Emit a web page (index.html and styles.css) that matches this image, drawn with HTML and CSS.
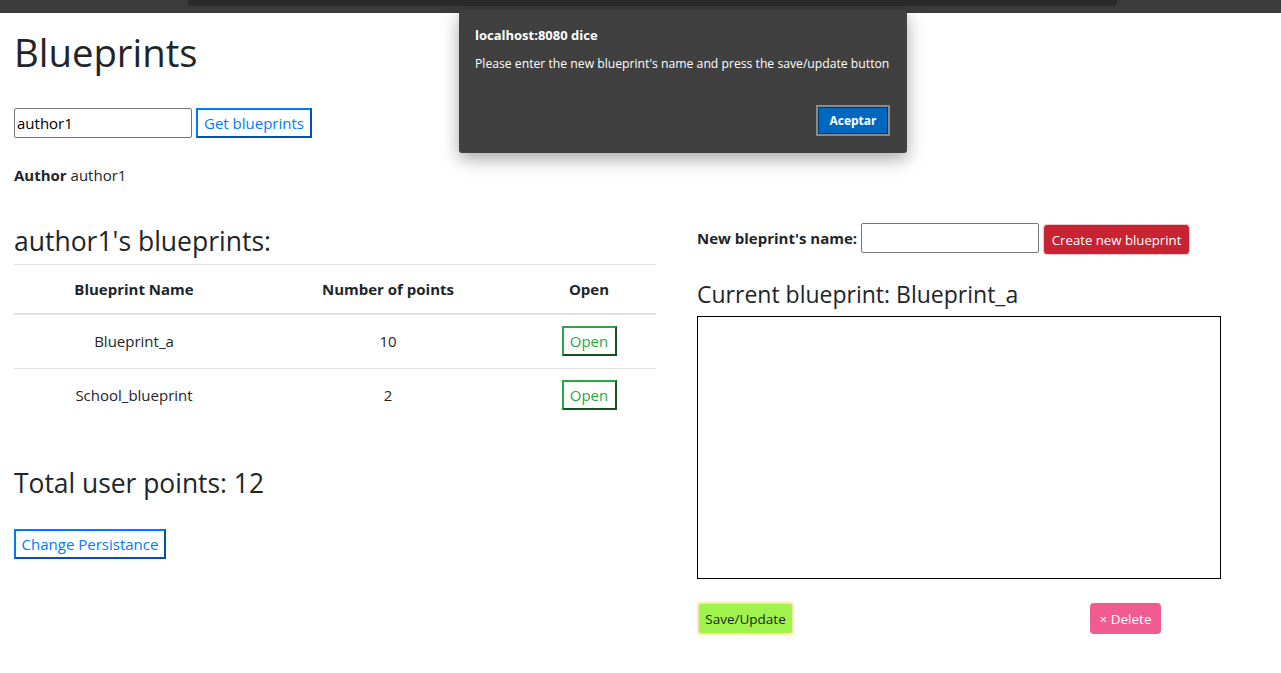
FILE: index.html
```html
<!DOCTYPE html>
<html lang="en">
<head>
<meta charset="utf-8">
<title>Blueprints</title>
<link rel="stylesheet" href="styles.css">
</head>
<body>
<div class="topbar"><div class="topbar-tab"></div></div>
<main class="page">
  <h1 class="title">Blueprints</h1>
  <div class="search-row">
    <input class="text-input" type="text" value="author1">
    <button class="btn-outline btn-blue">Get blueprints</button>
  </div>
  <p class="author-line"><b>Author</b> author1</p>
  <div class="columns">
    <section class="col-left">
      <h3 class="section-title">author1's blueprints:</h3>
      <table class="bp-table">
        <colgroup><col class="c1"><col class="c2"><col class="c3"></colgroup>
        <thead>
          <tr><th>Blueprint Name</th><th>Number of points</th><th>Open</th></tr>
        </thead>
        <tbody>
          <tr><td>Blueprint_a</td><td>10</td><td><button class="btn-outline btn-green">Open</button></td></tr>
          <tr><td>School_blueprint</td><td>2</td><td><button class="btn-outline btn-green">Open</button></td></tr>
        </tbody>
      </table>
      <h3 class="total-title">Total user points: 12</h3>
      <button class="btn-outline btn-blue btn-persist">Change Persistance</button>
    </section>
    <section class="col-right">
      <div class="new-row">
        <label class="new-label">New bleprint's name:</label>
        <input class="text-input" type="text">
        <button class="btn-red">Create new blueprint</button>
      </div>
      <h4 class="current-title">Current blueprint: Blueprint_a</h4>
      <canvas class="board" width="522" height="261"></canvas>
      <div class="actions">
        <button class="btn-save">Save/Update</button>
        <button class="btn-delete">× Delete</button>
      </div>
    </section>
  </div>
</main>
<div class="dialog">
  <div class="dialog-title">localhost:8080 dice</div>
  <div class="dialog-msg">Please enter the new blueprint's name and press the save/update button</div>
  <div class="dialog-foot"><button class="dialog-btn">Aceptar</button></div>
</div>
</body>
</html>
```

FILE: styles.css
```css
* { box-sizing: border-box; }
html, body { margin: 0; padding: 0; background: #fff; }
body {
  font-family: "Open Sans", "Noto Sans", sans-serif;
  font-size: 15px;
  line-height: 1.5;
  color: #212529;
}
.topbar {
  height: 13px;
  background: #3b3b3b;
}
.topbar-tab {
  margin-left: 188px;
  width: 929px;
  height: 6px;
  background: #2b2b2b;
  border-radius: 0 0 4px 4px;
}
.page { padding: 0 14px; }
.title {
  margin: 16px 0 0;
  font-size: 38.3px;
  font-weight: 500;
  line-height: 46px;
}
.search-row {
  margin-top: 33px;
  display: flex;
  align-items: center;
  gap: 4px;
  height: 30px;
}
.text-input {
  width: 178px;
  height: 30px;
  border: 1px solid #767676;
  border-radius: 2px;
  padding: 1px 2px;
  font-family: inherit;
  font-size: 15px;
  color: #000;
  background: #fff;
}
.btn-outline {
  background: #fff;
  font-family: inherit;
  font-size: 15px;
  line-height: 24px;
  padding: 1px 6px;
  border-width: 2px;
  border-style: outset;
  cursor: pointer;
}
.btn-blue { color: #007bff; border-color: #007bff; }
.btn-green { color: #28a745; border-color: #28a745; }
.search-row .btn-outline { height: 30px; width: 116px; padding: 0; }
.author-line {
  margin: 25px 0 0;
  line-height: 24px;
}
.columns {
  display: grid;
  grid-template-columns: 642px 524px;
  column-gap: 41px;
  margin-top: 31px;
  align-items: start;
}
.section-title {
  margin: 6px 0 6px;
  font-size: 26.5px;
  font-weight: 500;
  line-height: 34px;
}
.bp-table {
  width: 642px;
  border-collapse: collapse;
  text-align: center;
}
.bp-table .c1 { width: 240px; }
.bp-table .c2 { width: 268px; }
.bp-table .c3 { width: 134px; }
.bp-table th, .bp-table td {
  padding: 12px;
  border-top: 1px solid #dee2e6;
  vertical-align: middle;
  line-height: 24px;
}
.bp-table th { font-weight: 700; }
.bp-table thead th { border-bottom: 2px solid #dee2e6; }
.bp-table td { padding: 11px 12px 12px; }
.bp-table .btn-outline { height: 30px; width: 55px; padding: 0; }
.total-title {
  margin: 44px 0 0;
  font-size: 26.4px;
  font-weight: 500;
  line-height: 34px;
}
.btn-persist {
  margin-top: 29px;
  height: 30px;
  width: 152px;
  padding: 0;
}
.new-row {
  display: flex;
  align-items: center;
  gap: 4px;
  height: 34px;
  margin-top: 3px;
}
.new-label { font-weight: 700; font-size: 15px; }
.btn-red {
  height: 31px;
  width: 147px;
  margin-top: 3px;
  padding: 0;
  background: #c82333;
  color: #fff;
  border: 1px solid #f3c6cc;
  border-radius: 4px;
  font-family: inherit;
  font-size: 13.2px;
}
.current-title {
  margin: 25px 0 7px;
  font-size: 23px;
  font-weight: 500;
  line-height: 29px;
}
.board {
  display: block;
  width: 524px;
  height: 263px;
  border: 1px solid #000;
  background: #fff;
}
.actions {
  margin-top: 23px;
  width: 464px;
  display: flex;
  justify-content: space-between;
  align-items: center;
}
.btn-save {
  height: 33px;
  width: 97px;
  padding: 0;
  background: #9ff34c;
  color: #212529;
  border: 2px solid #fbe8a6;
  border-radius: 4px;
  font-family: inherit;
  font-size: 13.5px;
}
.btn-delete {
  height: 31px;
  width: 71px;
  padding: 0;
  background: #f05c8f;
  color: #fff;
  border: none;
  border-radius: 4px;
  font-family: inherit;
  font-size: 13.5px;
}
.dialog {
  position: absolute;
  left: 459px;
  top: 10px;
  width: 448px;
  height: 143px;
  background: #404040;
  border-radius: 3px;
  box-shadow: 0 6px 18px rgba(0,0,0,0.35);
  color: #fff;
  padding: 16px 17px 17px 16px;
  display: flex;
  flex-direction: column;
}
.dialog-title {
  font-size: 13px;
  font-weight: 700;
  line-height: 18px;
}
.dialog-msg {
  margin-top: 12px;
  font-size: 12.2px;
  line-height: 16px;
}
.dialog-foot {
  margin-top: auto;
  display: flex;
  justify-content: flex-end;
}
.dialog-btn {
  width: 74px;
  height: 31px;
  background: #0067c0;
  color: #fff;
  border: 2px solid #8a8a8a;
  box-shadow: inset 0 0 0 1px #003a70;
  font-family: inherit;
  font-size: 12px;
  font-weight: 700;
}
```
